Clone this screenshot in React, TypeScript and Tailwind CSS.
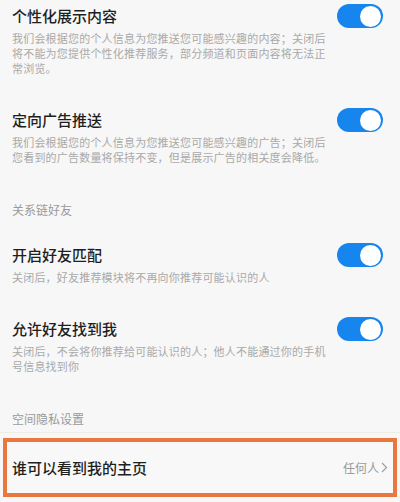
const font = "font-['Noto_Sans_CJK_SC','Noto_Sans',sans-serif]";

type ToggleItemProps = {
  title: string;
  desc: string;
  first?: boolean;
};

function Toggle() {
  return (
    <span className="flex h-[24px] w-[46px] shrink-0 items-center justify-end rounded-full bg-[#1686ee] px-[2px]">
      <span className="size-[21px] rounded-full bg-white" />
    </span>
  );
}

function ToggleItem({ title, desc, first }: ToggleItemProps) {
  return (
    <div className={first ? "pb-[17px] pl-3 pr-[17px] pt-[5px]" : "pb-[17px] pl-3 pr-[17px] pt-4"}>
      <div className="flex h-[22px] items-center justify-between">
        <span className="text-[15px] font-medium leading-[22px] text-[#1f1f1f]">{title}</span>
        <Toggle />
      </div>
      <p className="mt-1 w-[316px] text-[11px] leading-[15px] tracking-[0.2px] text-[#a9a9a9]">{desc}</p>
    </div>
  );
}

function SectionHeader({ label, last }: { label: string; last?: boolean }) {
  return (
    <div
      className={
        last
          ? "pb-[4px] pl-3 pt-[19px] text-[12px] leading-[18px] text-[#9a9a9a]"
          : "pb-[9px] pl-3 pt-[19px] text-[12px] leading-[18px] text-[#9a9a9a]"
      }
    >
      {label}
    </div>
  );
}

export default function App() {
  return (
    <div className={`${font} h-[502px] w-[400px] overflow-hidden bg-[#f7f7f7]`}>
      <ToggleItem
        first
        title="个性化展示内容"
        desc="我们会根据您的个人信息为您推送您可能感兴趣的内容；关闭后将不能为您提供个性化推荐服务，部分频道和页面内容将无法正常浏览。"
      />
      <ToggleItem
        title="定向广告推送"
        desc="我们会根据您的个人信息为您推送您可能感兴趣的广告；关闭后您看到的广告数量将保持不变，但是展示广告的相关度会降低。"
      />
      <SectionHeader label="关系链好友" />
      <ToggleItem title="开启好友匹配" desc="关闭后，好友推荐模块将不再向你推荐可能认识的人" />
      <ToggleItem
        title="允许好友找到我"
        desc="关闭后，不会将你推荐给可能认识的人；他人不能通过你的手机号信息找到你"
      />
      <SectionHeader label="空间隐私设置" last />
      <div className="h-px bg-[#efece4]" />

      <div className="mx-[3px] mt-[5px] flex h-[59px] items-center justify-between border-4 border-[#e9773e] bg-[#f8f8f8] pl-[5px] pr-[5px]">
        <span className="text-[15px] font-medium leading-[22px] text-[#1f1f1f]">谁可以看到我的主页</span>
        <span className="flex items-center gap-[2px] text-[12px] text-[#9a9a9a]">
          任何人
          <svg width="7" height="11" viewBox="0 0 7 11" fill="none" aria-hidden>
            <path d="M1 1l4.5 4.5L1 10" stroke="#a0a0a0" strokeWidth="1.2" />
          </svg>
        </span>
      </div>
    </div>
  );
}
